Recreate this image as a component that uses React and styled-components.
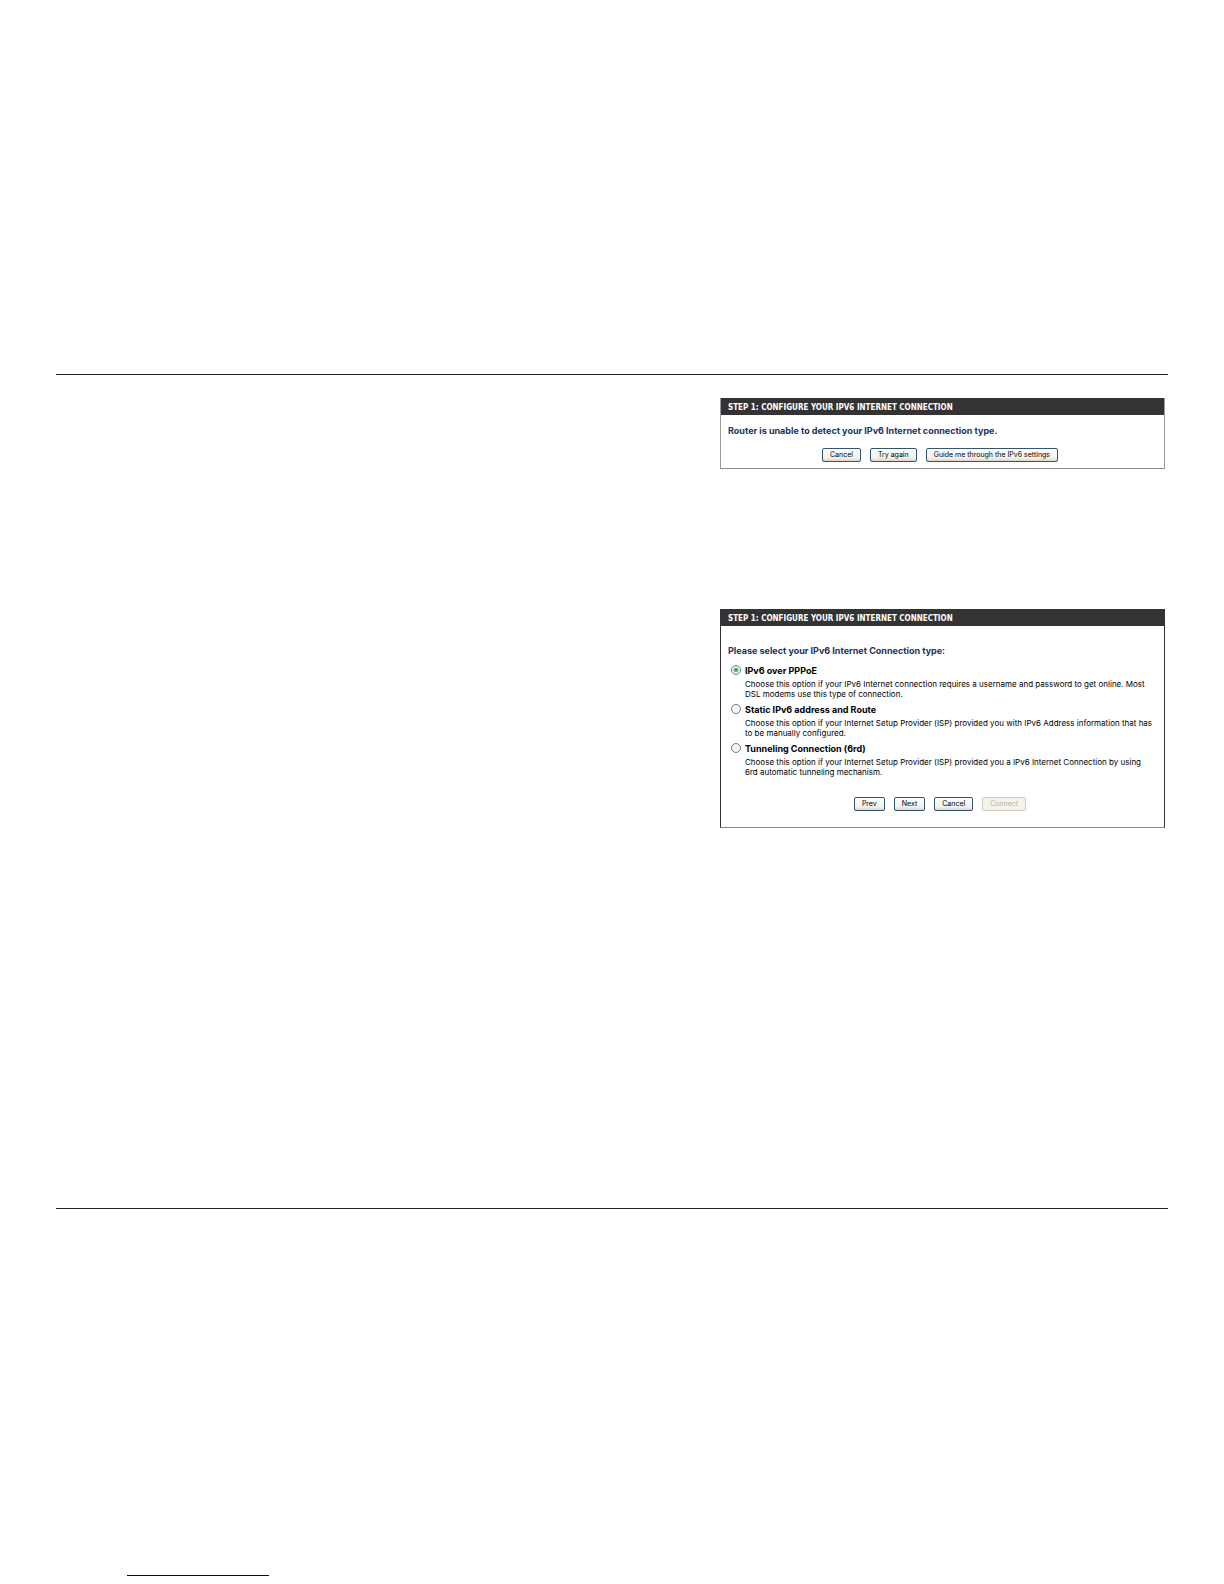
import React, { useState } from 'react';
import styled, { createGlobalStyle } from 'styled-components';

const GlobalStyle = createGlobalStyle`
  * {
    box-sizing: border-box;
  }

  body {
    margin: 0;
    background: #fff;
    color: #000;
    font-family: Inter, Tahoma, sans-serif;
    font-size: 8px;
    line-height: 10px;
  }
`;

const Page = styled.div`
  display: flex;
  flex-direction: column;
  min-height: 100vh;
  padding: 374px 56px 8px;
`;

const Content = styled.main`
  display: flex;
  flex-direction: column;
  align-items: flex-end;
  gap: 140px;
  min-height: 835px;
  padding: 23px 3px;
  border-top: 1px solid #231f20;
  border-bottom: 1px solid #231f20;
`;

const Footer = styled.footer`
  margin-top: auto;
  padding-left: 71px;
`;

const FooterLink = styled.a`
  display: block;
  width: 142px;
  border-bottom: 1px solid #000090;
`;

const Panel = styled.section`
  width: 40%;
  min-width: 445px;
  border: 1px solid ${(props) => (props.$dark ? '#333' : '#999')};
  border-top: 0;
  border-bottom-color: #888;
  background: #fff;
`;

const PanelTitle = styled.h2`
  margin: 0;
  padding: 2px 7px 0;
  background: #333;
  color: #fff;
  font-family: "DejaVu Sans Condensed", "DejaVu Sans", sans-serif;
  font-size: 8px;
  font-weight: bold;
  line-height: 15px;
  text-transform: uppercase;
`;

const PanelBody = styled.div`
  padding: ${(props) => (props.$tall ? '20px 0 16px' : '11px 0 6px')};
`;

const Message = styled.p`
  margin: 0;
  padding: 0 7px;
  color: #1b3160;
  font-size: 9px;
  font-weight: bold;
`;

const Options = styled.div`
  display: flex;
  flex-direction: column;
  gap: 5px;
  padding: 9px 0 20px 10px;
`;

const Option = styled.div`
  display: grid;
  grid-template-columns: 10px 1fr;
  column-gap: 4px;
`;

const Radio = styled.input`
  appearance: none;
  width: 10px;
  height: 10px;
  margin: 0;
  border: 1px solid #6b7c8c;
  border-radius: 50%;
  background: #f4f6f6;

  &:checked {
    background: radial-gradient(circle, #35a535 0 1px, #8ccb8c 2px, #f4f6f6 3px);
  }
`;

const OptionLabel = styled.label`
  font-size: 9px;
  font-weight: bold;
  line-height: 11px;
`;

const OptionText = styled.p`
  grid-column: 2;
  margin: 0;
  padding-top: 3px;
`;

const ButtonRow = styled.div`
  display: flex;
  justify-content: center;
  gap: 9px;
  padding: ${(props) => (props.$spaced ? '12px 5px 0 0' : '0 5px 0 0')};
`;

const Button = styled.button`
  height: 14px;
  padding: 0 7px;
  border: 1px solid #34556f;
  border-radius: 2px;
  background: linear-gradient(#fff, #f2f1ea 75%, #d9d5c9);
  color: #000;
  font-family: inherit;
  font-size: 7px;
  line-height: 12px;

  &:disabled {
    border-color: #d0cebf;
    background: #f5f4ea;
    color: #b3b1a0;
  }
`;

const connectionTypes = [
  {
    id: 'pppoe',
    label: 'IPv6 over PPPoE',
    text: ['Choose this option if your IPv6 Internet connection requires a username and password to get online. Most', 'DSL modems use this type of connection.'],
  },
  {
    id: 'static',
    label: 'Static IPv6 address and Route',
    text: ['Choose this option if your Internet Setup Provider (ISP) provided you with IPv6 Address information that has', 'to be manually configured.'],
  },
  {
    id: 'tunnel',
    label: 'Tunneling Connection (6rd)',
    text: ['Choose this option if your Internet Setup Provider (ISP) provided you a IPv6 Internet Connection by using', '6rd automatic tunneling mechanism.'],
  },
];

function DetectPanel() {
  return (
    <Panel>
      <PanelTitle>Step 1: Configure your IPv6 Internet Connection</PanelTitle>
      <PanelBody>
        <Message>Router is unable to detect your IPv6 Internet connection type.</Message>
        <ButtonRow $spaced>
          <Button type="button">Cancel</Button>
          <Button type="button">Try again</Button>
          <Button type="button">Guide me through the IPv6 settings</Button>
        </ButtonRow>
      </PanelBody>
    </Panel>
  );
}

function ConnectionPanel() {
  const [selected, setSelected] = useState('pppoe');

  return (
    <Panel $dark>
      <PanelTitle>Step 1: Configure your IPv6 Internet Connection</PanelTitle>
      <PanelBody $tall>
        <Message>Please select your IPv6 Internet Connection type:</Message>
        <Options>
          {connectionTypes.map((type) => (
            <Option key={type.id}>
              <Radio
                type="radio"
                name="connection"
                id={type.id}
                checked={selected === type.id}
                onChange={() => setSelected(type.id)}
              />
              <OptionLabel htmlFor={type.id}>{type.label}</OptionLabel>
              <OptionText>
                {type.text[0]}
                <br />
                {type.text[1]}
              </OptionText>
            </Option>
          ))}
        </Options>
        <ButtonRow>
          <Button type="button">Prev</Button>
          <Button type="button">Next</Button>
          <Button type="button">Cancel</Button>
          <Button type="button" disabled>Connect</Button>
        </ButtonRow>
      </PanelBody>
    </Panel>
  );
}

function App() {
  return (
    <>
      <GlobalStyle />
      <Page>
        <Content>
          <DetectPanel />
          <ConnectionPanel />
        </Content>
        <Footer>
          <FooterLink href="#top" aria-label="Back to top" />
        </Footer>
      </Page>
    </>
  );
}

export default App;
